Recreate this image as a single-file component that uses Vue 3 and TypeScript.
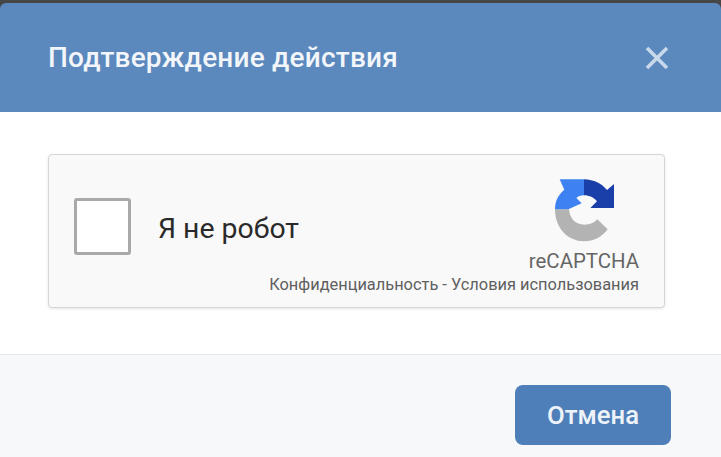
<template>
  <div class="modal">
    <header class="modal-head">
      <h1 class="modal-title">{{ title }}</h1>
      <button class="modal-close" aria-label="Закрыть">
        <svg width="24" height="24" viewBox="0 0 24 24">
          <path d="M2 2 22 22M22 2 2 22" stroke="#c9d8ea" stroke-width="3.6" fill="none" />
        </svg>
      </button>
    </header>
    <main class="modal-body">
      <div class="captcha">
        <span class="captcha-check"></span>
        <span class="captcha-label">Я не робот</span>
        <div class="captcha-brand">
          <svg class="captcha-logo" width="62" height="64" viewBox="75 36 186 192">
            <path fill="#b3b3b3" d="M78 130H120C122 158 140 176 166 176C183 176 196 170 205 160L236 190C219 213 194 226 165 226C115 226 78 185 78 130Z" />
            <path fill="#3d82f0" d="M92 40H165V88C154 88 148 91 142 96L158 112L118 130H78C78 106 87 87 106 71Z" />
            <path fill="#1b3fa8" d="M165 40C195 41 218 53 234 72L255 54V126H184L204 106C195 95 181 88 165 88Z" />
          </svg>
          <span class="captcha-name">reCAPTCHA</span>
          <span class="captcha-links">Конфиденциальность - Условия использования</span>
        </div>
      </div>
    </main>
    <footer class="modal-foot">
      <button class="btn-cancel">Отмена</button>
    </footer>
  </div>
</template>

<script setup lang="ts">
const title = 'Подтверждение действия';
</script>

<style>
html, body { background: #464646; }
</style>

<style scoped>
.modal {
    height: 457px;
    padding-top: 3px;
    box-sizing: border-box;
    display: flex;
    flex-direction: column;
    overflow: hidden;
    font-family: Roboto, "Noto Sans", sans-serif;
}
.modal-head {
    height: 109px;
    flex: none;
    display: flex;
    align-items: center;
    justify-content: space-between;
    padding: 0 52px 0 48px;
    background: #5b88bd;
    border-radius: 6px 6px 0 0;
}
.modal-title {
    margin: 0;
    color: #f2f6fa;
    font-size: 28px;
    font-weight: 500;
    letter-spacing: 0.2px;
}
.modal-close {
    display: flex;
    padding: 0;
    border: 0;
    background: none;
}
.modal-body {
    height: 242px;
    flex: none;
    box-sizing: border-box;
    padding: 42px 56px 0 48px;
    background: #fff;
}
.captcha {
    height: 154px;
    box-sizing: border-box;
    display: flex;
    align-items: flex-start;
    padding: 43px 25px 0;
    background: #f9f9f9;
    border: 1px solid #d6d6d6;
    border-radius: 4px;
    box-shadow: 0 1px 3px rgba(0, 0, 0, 0.1);
}
.captcha-check {
    width: 57px;
    height: 57px;
    box-sizing: border-box;
    flex: none;
    background: #fff;
    border: 3px solid #a9a9a9;
    border-radius: 3px;
}
.captcha-label {
    margin: 13px 0 0 27px;
    color: #2a2a2a;
    font-size: 28.4px;
    line-height: 36px;
    white-space: nowrap;
}
.captcha-brand {
    width: 200px;
    margin: -20px 0 0 auto;
    display: flex;
    flex-direction: column;
    align-items: flex-end;
}
.captcha-logo {
    margin-right: 23px;
}
.captcha-name {
    margin-top: 7px;
    color: #666;
    font-size: 20.4px;
    line-height: 24px;
}
.captcha-links {
    margin-top: 2px;
    color: #5f5f5f;
    font-size: 16.4px;
    line-height: 20px;
    white-space: nowrap;
}
.modal-foot {
    flex: 1;
    display: flex;
    justify-content: flex-end;
    padding: 30px 50px 0 0;
    background: #f7f8fa;
    border-top: 1px solid #e3e7ec;
}
.btn-cancel {
    width: 156px;
    height: 60px;
    border: 0;
    border-radius: 8px;
    background: #4f7fb8;
    color: #eef3f9;
    font-family: inherit;
    font-size: 25.7px;
    font-weight: 500;
}
</style>
